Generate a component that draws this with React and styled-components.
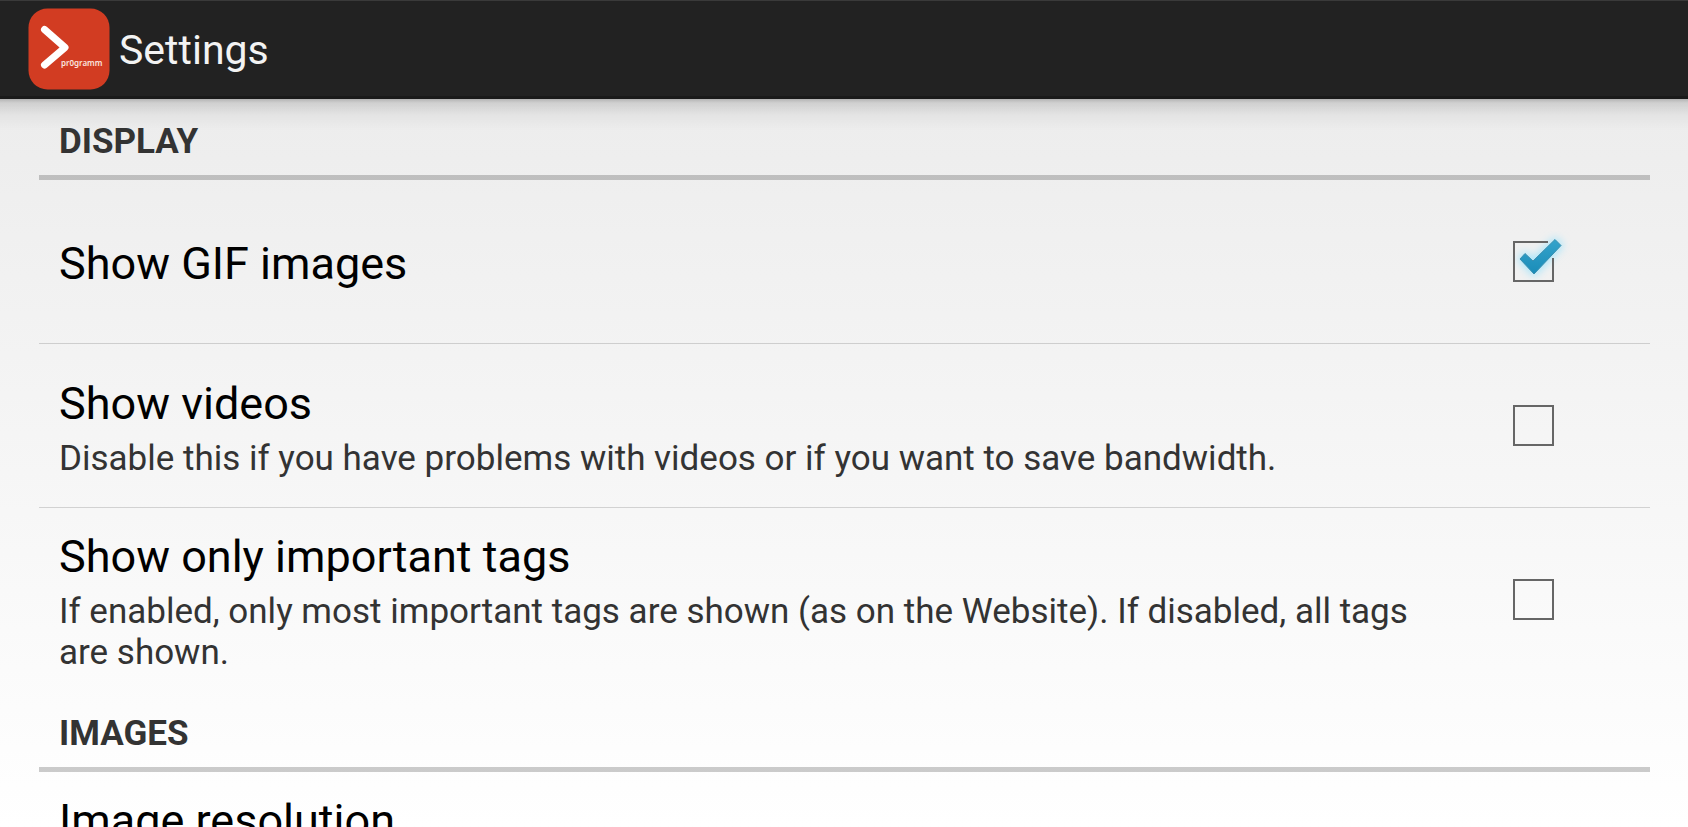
import React, { useState } from 'react';
import styled, { createGlobalStyle } from 'styled-components';

const GlobalStyles = createGlobalStyle`
  * {
    box-sizing: border-box;
  }
  body {
    margin: 0;
    font-family: Roboto, 'Liberation Sans', sans-serif;
  }
  h1, h2, p, ul {
    margin: 0;
    padding: 0;
  }
`;

const ScreenStyles = styled.div`
  display: flex;
  flex-direction: column;
  height: 100vh;
  overflow: hidden;
  background: linear-gradient(#eaeaea, #ffffff);
`;

const ActionBar = styled.header`
  position: relative;
  display: flex;
  align-items: center;
  gap: 9px;
  flex-shrink: 0;
  height: 99px;
  padding: 0 28px;
  background-color: #222;
  border-top: 1px solid #3a3a3a;
  border-bottom: 3px solid #1a1a1a;
  .logo {
    display: block;
    width: 82px;
    height: 82px;
  }
  &::after {
    content: '';
    position: absolute;
    top: calc(100% + 3px);
    left: 0;
    right: 0;
    height: 32px;
    background: linear-gradient(
      rgba(0, 0, 0, 0.24),
      rgba(0, 0, 0, 0.12) 4px,
      rgba(0, 0, 0, 0.04) 16px,
      transparent
    );
    pointer-events: none;
  }
`;

const ActionBarTitle = styled.h1`
  padding-top: 2px;
  color: #f3f3f3;
  font-size: 41px;
  font-weight: 400;
  line-height: 48px;
`;

const PreferenceList = styled.main`
  flex: 1;
  min-height: 0;
  padding: 0 38px 0 39px;
  overflow-y: auto;
  scrollbar-width: none;
`;

const CategoryTitle = styled.h2`
  padding: 22px 20px 12px;
  border-bottom: 5px solid rgba(0, 0, 0, 0.2);
  color: #333;
  font-size: 35px;
  font-weight: 700;
  line-height: 42px;
  text-transform: uppercase;
`;

const PreferenceItems = styled.ul`
  list-style: none;
  li + li {
    border-top: 1px solid rgba(0, 0, 0, 0.15);
  }
`;

const PreferenceRow = styled.label`
  display: flex;
  align-items: ${({ $align }) => $align || 'center'};
  gap: 60px;
  min-height: 163px;
  padding: 0 96px 0 20px;
`;

const PreferenceText = styled.div`
  flex: 1;
  padding: 22px 0 18px;
`;

const PreferenceTitle = styled.p`
  color: #000;
  font-size: 45px;
  line-height: 54px;
`;

const PreferenceSummary = styled.p`
  margin-top: 7px;
  color: #333;
  font-size: 35px;
  line-height: 41px;
`;

const CheckBoxStyles = styled.span`
  position: relative;
  display: block;
  width: 41px;
  height: 41px;
  input {
    appearance: none;
    display: block;
    width: 41px;
    height: 41px;
    margin: 0;
    border: 2px solid #666;
  }
  input:checked {
    border-color: transparent;
  }
  svg {
    position: absolute;
    top: -10px;
    left: -10px;
    pointer-events: none;
  }
`;

function Logo() {
  return (
    <svg className="logo" viewBox="0 0 82 82" aria-hidden="true">
      <rect x="0.5" y="0.5" width="81" height="81" rx="19" fill="#d23c22" />
      <path
        d="M16.5 21.5 L37 39.5 L16.5 57"
        fill="none"
        stroke="#fff"
        strokeWidth="7"
        strokeLinecap="round"
        strokeLinejoin="round"
      />
      <text
        x="33"
        y="58"
        fill="#fbe4df"
        fontFamily="'Noto Sans', sans-serif"
        fontSize="8"
        fontWeight="600"
      >
        pr0gramm
      </text>
    </svg>
  );
}

function CheckMark() {
  return (
    <svg width="68" height="64" viewBox="0 0 68 64" aria-hidden="true">
      <defs>
        <linearGradient id="tick" x1="0" y1="0" x2="0" y2="1">
          <stop offset="0" stopColor="#35a3cb" />
          <stop offset="1" stopColor="#1a8cb8" />
        </linearGradient>
        <filter id="glow" x="-40%" y="-40%" width="180%" height="180%">
          <feGaussianBlur stdDeviation="4" />
        </filter>
      </defs>
      <path
        d="M17 28 L22 22.5 L30 30 L52 8.5 L58 14.5 L31 43 Z"
        fill="#a5e4fa"
        stroke="#a5e4fa"
        strokeWidth="4"
        filter="url(#glow)"
      />
      <path d="M45 11 H11 V50 H50 V27" fill="none" stroke="#666" strokeWidth="2" />
      <path
        d="M17 28 L22 22.5 L30 30 L52 8.5 L58 14.5 L31 43 Z"
        fill="url(#tick)"
        stroke="#3a8fb0"
        strokeWidth="1"
        strokeLinejoin="round"
      />
    </svg>
  );
}

function CheckBox({ checked, onChange }) {
  return (
    <CheckBoxStyles>
      <input type="checkbox" checked={checked} onChange={onChange} />
      {checked && <CheckMark />}
    </CheckBoxStyles>
  );
}

function CheckBoxPreference({ title, summary, defaultValue = false }) {
  const [checked, setChecked] = useState(defaultValue);

  return (
    <li>
      <PreferenceRow>
        <PreferenceText>
          <PreferenceTitle>{title}</PreferenceTitle>
          {summary && <PreferenceSummary>{summary}</PreferenceSummary>}
        </PreferenceText>
        <CheckBox checked={checked} onChange={() => setChecked(!checked)} />
      </PreferenceRow>
    </li>
  );
}

export default function App() {
  return (
    <>
      <GlobalStyles />
      <ScreenStyles>
        <ActionBar>
          <Logo />
          <ActionBarTitle>Settings</ActionBarTitle>
        </ActionBar>
        <PreferenceList>
          <CategoryTitle>Display</CategoryTitle>
          <PreferenceItems>
            <CheckBoxPreference title="Show GIF images" defaultValue />
            <CheckBoxPreference
              title="Show videos"
              summary="Disable this if you have problems with videos or if you want to save bandwidth."
            />
            <CheckBoxPreference
              title="Show only important tags"
              summary="If enabled, only most important tags are shown (as on the Website). If disabled, all tags are shown."
            />
          </PreferenceItems>
          <CategoryTitle>Images</CategoryTitle>
          <PreferenceItems>
            <li>
              <PreferenceRow as="div" $align="flex-start">
                <PreferenceText>
                  <PreferenceTitle>Image resolution</PreferenceTitle>
                </PreferenceText>
              </PreferenceRow>
            </li>
          </PreferenceItems>
        </PreferenceList>
      </ScreenStyles>
    </>
  );
}
